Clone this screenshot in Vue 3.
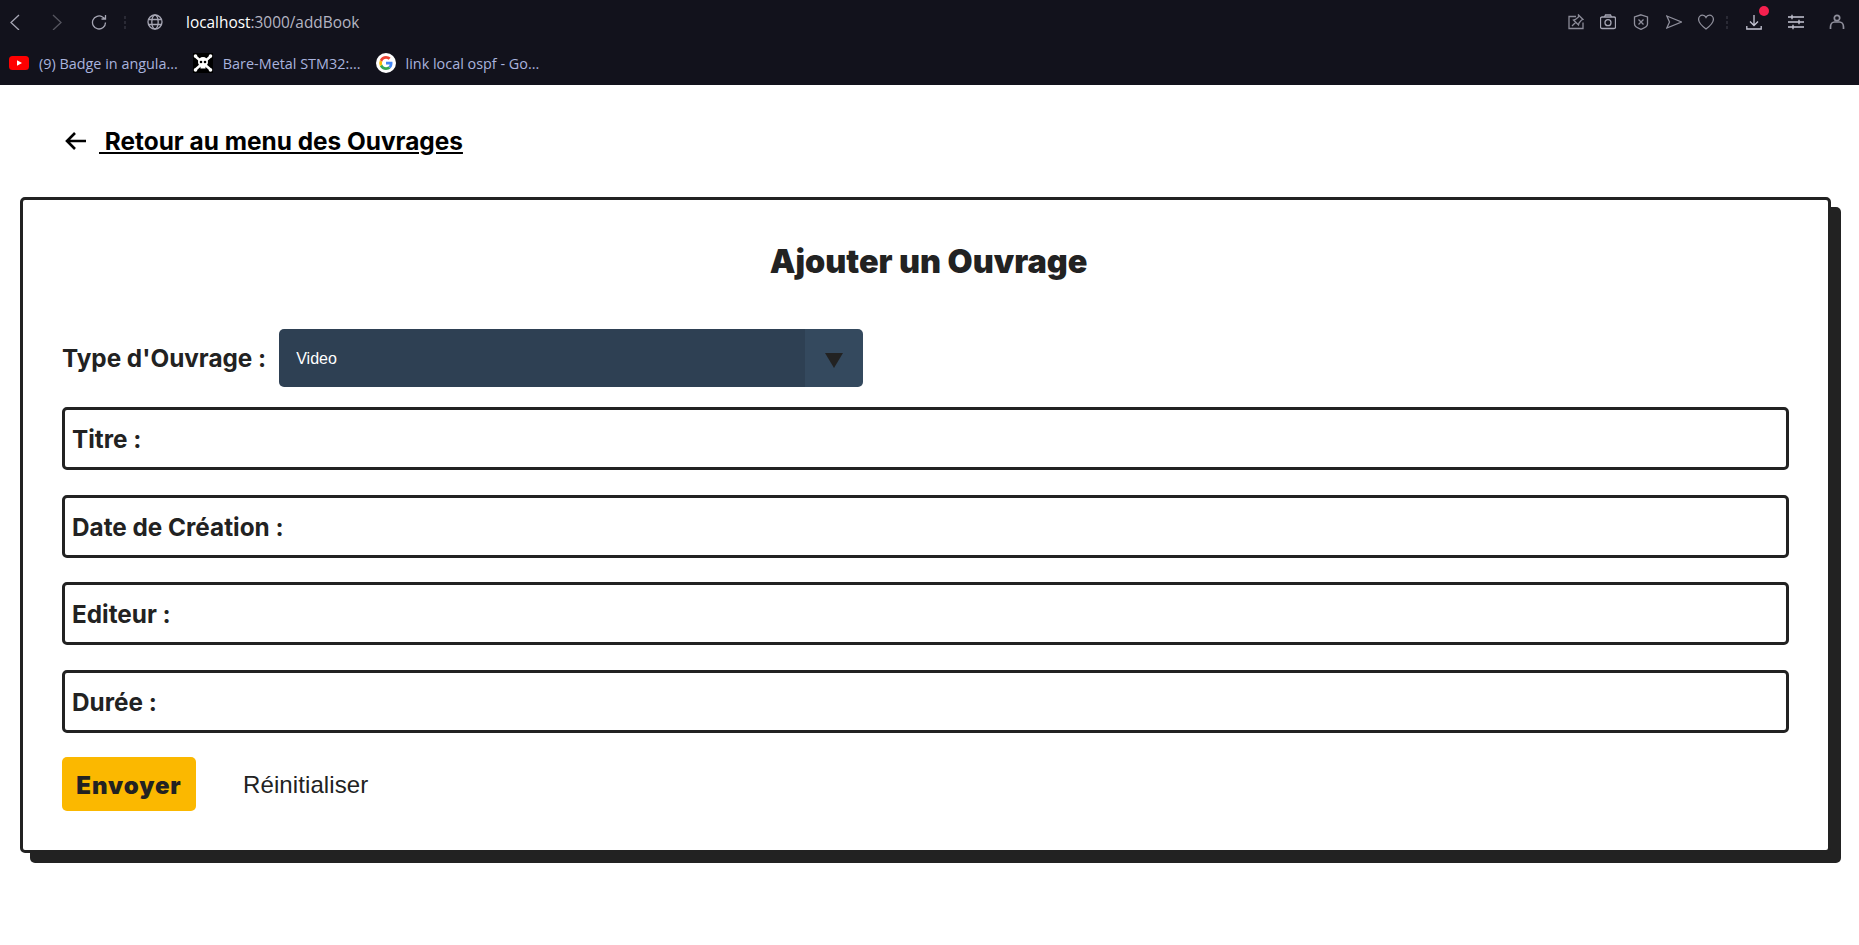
<template>
  <div class="page">
    <header class="chrome">
      <div class="nav-row">
        <svg class="ico back" viewBox="0 0 16 16"><path d="M12 1 4 8.500 12 16" /></svg>
        <svg class="ico forward" viewBox="0 0 16 16"><path d="M4 1l8 7.500L4 16" /></svg>
        <svg class="ico reload" viewBox="0 0 16 16"><path d="M14.500 8.500A6.500 6.500 0 1 1 11.500 3L14.500 5M14.500 1v4h-4" /></svg>
        <span class="dots reload-dots"></span>
        <svg class="ico globe" viewBox="0 0 16 16">
          <circle cx="8" cy="8" r="7" />
          <ellipse cx="8" cy="8" rx="3.200" ry="7" />
          <path d="M1.500 5.500h13M1.500 10.500h13" />
        </svg>
        <div class="url"><b>localhost</b>:3000/addBook</div>

        <div class="tools">
          <svg class="ico tool pin" viewBox="0 0 16 16">
            <path d="M8 2.500H1v12h14v-6" />
            <path d="M4 12l3.500-3.500M10.500 1l4.500 4.500-1.500.5-2.500 3-.5 2-5-5 2-.5 3-2.500z" />
          </svg>
          <svg class="ico tool" viewBox="0 0 16 16">
            <rect x="0.500" y="3" width="15" height="11.500" rx="1.500" />
            <circle cx="8" cy="8.700" r="3" />
            <path d="M4.500 3 5.500 1h5l1 2" />
          </svg>
          <svg class="ico tool shield" viewBox="0 0 16 16">
            <path d="M8 .8 14.500 3v7c0 2.500-3.500 4.200-6.500 5.300C5 14.200 1.500 12.500 1.500 10V3z" />
            <path d="M5.500 5.500l5 5M10.500 5.500l-5 5" />
          </svg>
          <svg class="ico tool send" viewBox="0 0 16 16"><path d="M.8 2 15.500 8 .8 14 3.500 8z" /></svg>
          <svg class="ico tool heart" viewBox="0 0 16 16"><path d="M8 15C4 12 .6 9 .6 5.400 .6 3 2.400 1.200 4.500 1.200 6 1.200 7.300 2 8 3.400 8.700 2 10 1.200 11.500 1.200 13.600 1.200 15.400 3 15.400 5.400 15.400 9 12 12 8 15z" /></svg>
          <span class="dots tool-dots"></span>
          <div class="download">
            <svg class="ico light" viewBox="0 0 16 16"><path d="M8 1v10M4 7.500 8 11.500 12 7.500M.8 12v3h14.400v-3" /></svg>
            <span class="badge"></span>
          </div>
          <svg class="ico tool light sliders" viewBox="0 0 16 16">
            <path d="M0 3h16M0 8h16M0 13h16M4 .8v4.400M11 5.800v4.400M5 10.800v4.400" />
          </svg>
          <svg class="ico tool user" viewBox="0 0 16 16">
            <circle cx="8" cy="4" r="2.700" />
            <path d="M1.500 15v-2c0-3 2-5 4-5h5c2 0 4 2 4 5v2" />
          </svg>
        </div>
      </div>

      <div class="bookmarks">
        <a class="mark">
          <svg class="fav yt" viewBox="0 0 20 14">
            <rect width="20" height="14" rx="3.500" fill="#f00" />
            <path d="M8 4.200 13 7 8 9.800z" fill="#fff" />
          </svg>
          <span>(9) Badge in angula...</span>
        </a>
        <a class="mark">
          <svg class="fav skull" viewBox="0 0 20 20">
            <rect width="20" height="20" fill="#000" />
            <path d="M2 3 18 17M18 3 2 17" stroke="#fff" stroke-width="2.500" />
            <circle cx="2.500" cy="3" r="1.800" fill="#fff" />
            <circle cx="17.500" cy="3" r="1.800" fill="#fff" />
            <circle cx="2.500" cy="17" r="1.800" fill="#fff" />
            <circle cx="17.500" cy="17" r="1.800" fill="#fff" />
            <circle cx="10" cy="9" r="5" fill="#fff" />
            <rect x="7.500" y="12" width="5" height="3.500" fill="#fff" />
            <circle cx="8" cy="9" r="1.300" fill="#000" />
            <circle cx="12" cy="9" r="1.300" fill="#000" />
          </svg>
          <span>Bare-Metal STM32:...</span>
        </a>
        <a class="mark">
          <svg class="fav g" viewBox="0 0 20 20">
            <circle cx="10" cy="10" r="10" fill="#fff" />
            <path d="M16.500 10.200c0-.5 0-1-.1-1.400H10v2.700h3.700c-.2.900-.6 1.600-1.400 2.100l2.200 1.700c1.300-1.200 2-3 2-5.100z" fill="#4285f4" />
            <path d="M10 17c1.900 0 3.400-.6 4.500-1.700l-2.200-1.700c-.6.400-1.400.7-2.300.7-1.800 0-3.300-1.200-3.800-2.800L3.900 13.200C5 15.500 7.300 17 10 17z" fill="#34a853" />
            <path d="M6.200 11.500a4.200 4.200 0 0 1 0-2.800L3.900 6.900a7 7 0 0 0 0 6.300z" fill="#fbbc05" />
            <path d="M10 5.800c1 0 1.900.4 2.600 1l2-2C13.400 3.700 11.800 3 10 3 7.300 3 5 4.500 3.900 6.900l2.300 1.800C6.700 7 8.200 5.800 10 5.800z" fill="#ea4335" />
          </svg>
          <span>link local ospf - Go...</span>
        </a>
      </div>
    </header>

    <main class="content">
      <div class="back-row">
        <svg class="back-arrow" viewBox="0 0 24 24"><path d="M22 12H3M11 4l-8 8 8 8" /></svg>
        <a class="back-link" href="#">&nbsp;Retour au menu des Ouvrages</a>
      </div>

      <form class="card" @submit.prevent="send" @reset.prevent="reset">
        <h1>Ajouter un Ouvrage</h1>

        <div class="type-row">
          <label for="type">Type d'Ouvrage :</label>
          <div class="select-wrap">
            <select id="type" v-model="type">
              <option v-for="t in types" :key="t">{{ t }}</option>
            </select>
            <span class="arrow"></span>
          </div>
        </div>

        <label v-for="f in fields" :key="f.key" class="field">
          <span>{{ f.label }}</span>
          <input v-model="values[f.key]" type="text" />
        </label>

        <div class="actions">
          <button class="submit" type="submit">Envoyer</button>
          <button class="clear" type="reset">Réinitialiser</button>
        </div>
      </form>
    </main>
  </div>
</template>

<script setup>
import { reactive, ref } from "vue";

const types = ["Video", "Livre", "Audio"];
const type = ref("Video");

const fields = [
  { key: "titre", label: "Titre :" },
  { key: "date", label: "Date de Création :" },
  { key: "editeur", label: "Editeur :" },
  { key: "duree", label: "Durée :" },
];

const values = reactive({ titre: "", date: "", editeur: "", duree: "" });

function send() {}

function reset() {
  fields.forEach((f) => (values[f.key] = ""));
  type.value = "Video";
}
</script>

<style>
html,
body {
  margin: 0;
  background: #fff;
}
</style>

<style scoped>
.page {
  min-height: 945px;
  font-family: Inter, "Liberation Sans", sans-serif;
  color: #222;
}

.chrome {
  height: 85px;
  box-sizing: border-box;
  background: #12121c;
  padding-top: 12px;
}
.nav-row {
  display: flex;
  align-items: center;
  height: 20px;
  padding-left: 7px;
  padding-right: 14px;
}
.ico {
  width: 16px;
  height: 16px;
  flex: none;
  fill: none;
  stroke: #a6a6b4;
  stroke-width: 1.3;
}
.forward {
  margin-left: 26px;
  stroke: #55555f;
}
.reload {
  margin-left: 26px;
}
.dots {
  width: 2px;
  flex: none;
  background: repeating-linear-gradient(#2a2a35 0 3px, transparent 3px 5px);
  height: 13px;
}
.reload-dots {
  margin-left: 17px;
}
.globe {
  margin-left: 21px;
}
.url {
  margin-left: 23px;
  font-family: "Open Sans", sans-serif;
  font-size: 15.4px;
  color: #b5b5c2;
}
.url b {
  font-weight: 400;
  color: #fff;
}
.tools {
  margin-left: auto;
  display: flex;
  align-items: center;
}
.tool {
  margin-left: 16px;
}
.pin {
  margin-left: 0;
  stroke: #8b8b98;
}
.shield,
.send,
.heart {
  stroke: #8f8f9c;
}
.shield {
  margin-left: 17px;
}
.send {
  margin-left: 17px;
}
.tool-dots {
  margin-left: 12px;
}
.download {
  margin-left: 18px;
  position: relative;
  height: 16px;
}
.light {
  stroke: #c6c6d4;
}
.badge {
  position: absolute;
  left: 13px;
  top: -8px;
  width: 10px;
  height: 10px;
  border-radius: 50%;
  background: #f5204e;
}
.sliders {
  margin-left: 26px;
}
.user {
  margin-left: 25px;
  stroke: #8f8f9c;
  stroke-width: 1.7;
}

.bookmarks {
  display: flex;
  align-items: center;
  height: 20px;
  margin-top: 21px;
  padding-left: 9px;
}
.mark {
  display: flex;
  align-items: center;
  font-family: "Open Sans", sans-serif;
  font-size: 14.4px;
  color: #a9b3de;
  margin-right: 15px;
}
.fav {
  flex: none;
  margin-right: 10px;
}
.yt {
  width: 20px;
  height: 14px;
}
.skull,
.g {
  width: 20px;
  height: 20px;
}

.content {
  padding: 40px 28px 0 20px;
}
.back-row {
  display: flex;
  align-items: center;
  padding-left: 44px;
  height: 32px;
}
.back-arrow {
  width: 24px;
  height: 24px;
  fill: none;
  stroke: #000;
  stroke-width: 2.600;
}
.back-link {
  margin-left: 11px;
  font-size: 24.4px;
  font-weight: 700;
  color: #000;
}

.card {
  margin-top: 40px;
  box-sizing: border-box;
  border: 3px solid #222;
  border-radius: 5px;
  box-shadow: 10px 10px 0 #222;
  padding: 0 39px 39px 39px;
  background: #fff;
}
h1 {
  margin: 43px 0 0;
  padding-left: 6px;
  text-align: center;
  font-size: 32.4px;
  line-height: 38px;
  font-weight: 900;
  color: #222;
}
.type-row {
  display: flex;
  align-items: center;
  margin-top: 48px;
}
.type-row label {
  font-size: 24.3px;
  font-weight: 700;
  padding-right: 13px;
}
.select-wrap {
  position: relative;
  width: 584px;
  height: 58px;
}
select {
  appearance: none;
  width: 100%;
  height: 100%;
  border: 0;
  border-radius: 5px;
  padding: 0 0 0 17px;
  background: linear-gradient(to right, #2e4053 526px, #34495e 526px);
  color: #fff;
  font-family: "Liberation Sans", sans-serif;
  font-size: 16px;
}
.arrow {
  position: absolute;
  right: 20px;
  top: 24px;
  border-left: 9px solid transparent;
  border-right: 9px solid transparent;
  border-top: 15px solid #222;
  pointer-events: none;
}
.field {
  display: flex;
  align-items: center;
  box-sizing: border-box;
  height: 63px;
  margin-top: 20px;
  padding: 1px 7px 0;
  border: 3px solid #222;
  border-radius: 5px;
  font-size: 24.3px;
  font-weight: 700;
}
.type-row + .field {
  margin-top: 20px;
}
.field span {
  flex: none;
  margin-right: 6px;
}
.field + .field {
  margin-top: 24.7px;
}
.field input {
  flex: 1;
  min-width: 0;
  border: 0;
  outline: 0;
  background: transparent;
  font: inherit;
  color: inherit;
}
.actions {
  display: flex;
  align-items: center;
  margin-top: 24px;
}
.actions button {
  height: 54px;
  border: 0;
  border-radius: 5px;
  cursor: pointer;
  color: #222;
  font-size: 24px;
  padding: 2px 0 0;
}
.submit {
  width: 134px;
  background: #fbb800;
  font-family: Inter, sans-serif;
  font-weight: 900;
  letter-spacing: 0.9px;
}
.clear {
  margin-left: 47px;
  background: none;
  font-family: "Liberation Sans", sans-serif;
  letter-spacing: 0.1px;
}
</style>
